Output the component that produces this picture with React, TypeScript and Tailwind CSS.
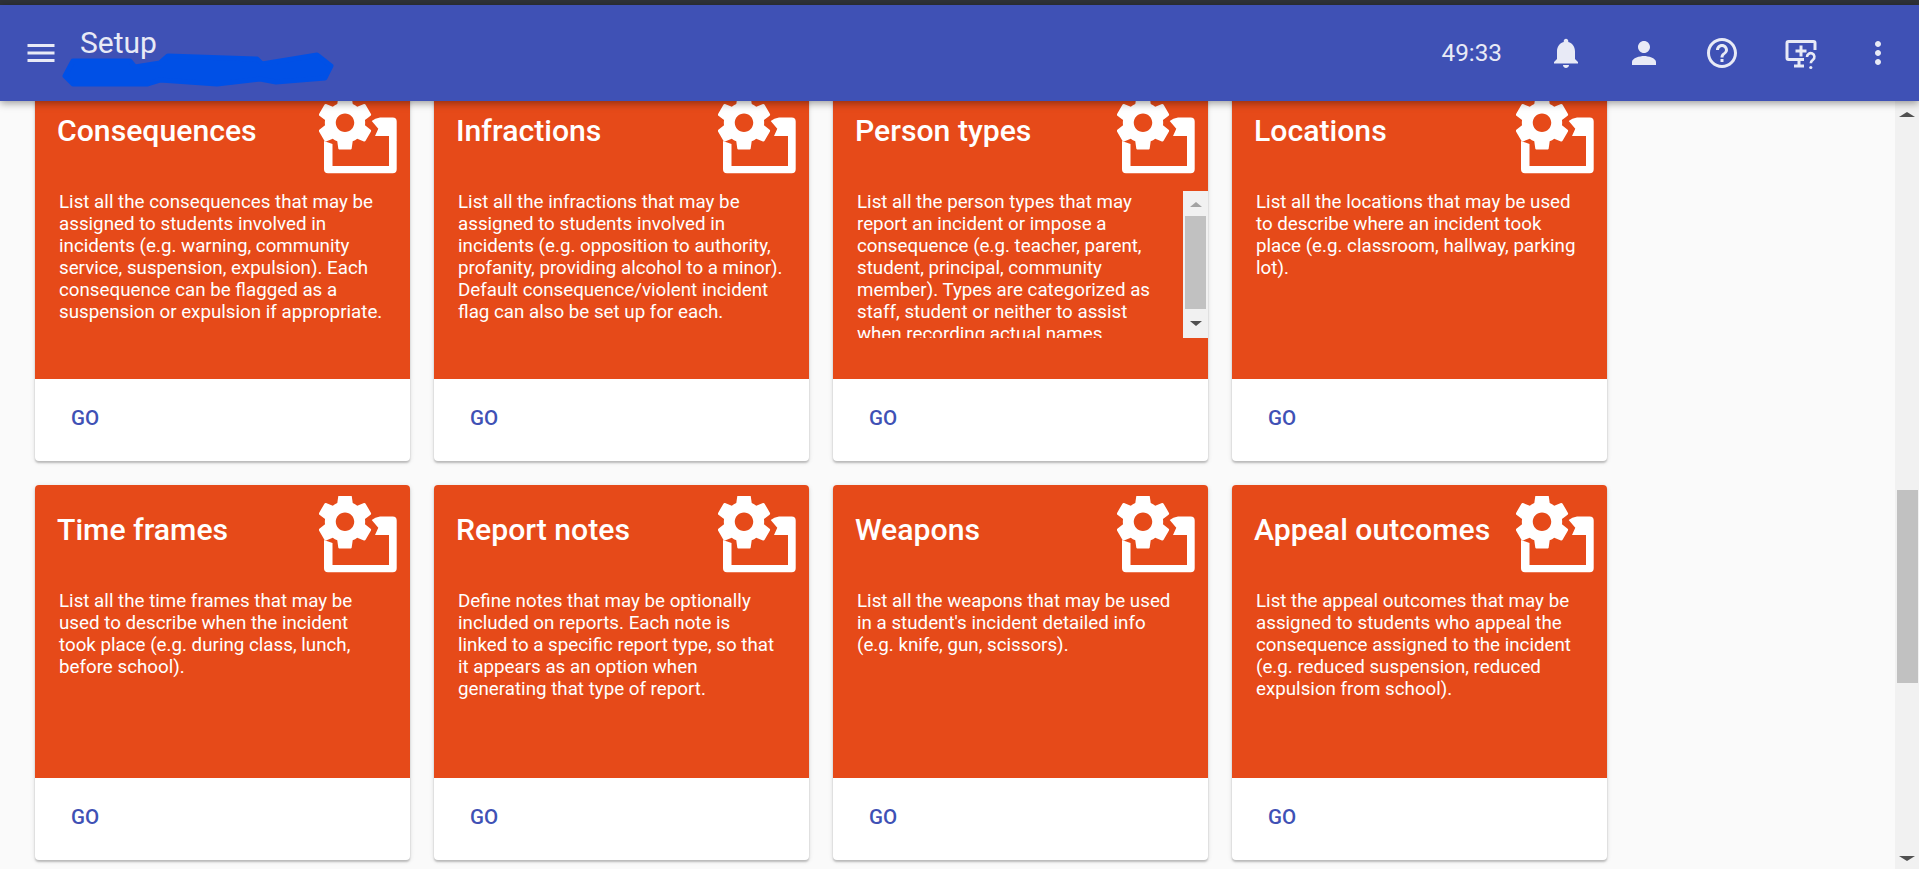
import type { ReactNode } from "react";

const cards = [
	{
		title: "Consequences",
		text: "List all the consequences that may be assigned to students involved in incidents (e.g. warning, community service, suspension, expulsion). Each consequence can be flagged as a suspension or expulsion if appropriate.",
	},
	{
		title: "Infractions",
		text: "List all the infractions that may be assigned to students involved in incidents (e.g. opposition to authority, profanity, providing alcohol to a minor). Default consequence/violent incident flag can also be set up for each.",
	},
	{
		title: "Person types",
		text: "List all the person types that may report an incident or impose a consequence (e.g. teacher, parent, student, principal, community member). Types are categorized as staff, student or neither to assist when recording actual names",
		scroll: true,
	},
	{
		title: "Locations",
		text: "List all the locations that may be used to describe where an incident took place (e.g. classroom, hallway, parking lot).",
	},
	{
		title: "Time frames",
		text: "List all the time frames that may be used to describe when the incident took place (e.g. during class, lunch, before school).",
	},
	{
		title: "Report notes",
		text: "Define notes that may be optionally included on reports. Each note is linked to a specific report type, so that it appears as an option when generating that type of report.",
	},
	{
		title: "Weapons",
		text: "List all the weapons that may be used in a student's incident detailed info (e.g. knife, gun, scissors).",
	},
	{
		title: "Appeal outcomes",
		text: "List the appeal outcomes that may be assigned to students who appeal the consequence assigned to the incident (e.g. reduced suspension, reduced expulsion from school).",
	},
];

const Icon = ({ d }: { d: string }) => (
	<svg viewBox="0 0 24 24" className="h-9 w-9 fill-[#e8eaf6]">
		<path d={d} />
	</svg>
);

const HeaderButton = ({ children }: { children: ReactNode }) => (
	<button type="button" className="flex h-9 w-[78px] items-center justify-center">
		{children}
	</button>
);

const MonitorHelpIcon = () => (
	<svg viewBox="0 0 36 36" className="h-9 w-9 fill-none stroke-[#e8eaf6]" strokeWidth="3">
		<path d="M33 15V8a1.5 1.5 0 0 0-1.5-1.5h-25A1.5 1.5 0 0 0 5 8v15a1.5 1.5 0 0 0 1.5 1.5H22" />
		<path d="M17 25v5M12 31h10" />
		<path d="M19 10.500v11M13.500 16h11" />
		<path d="M25 22a3.700 3.700 0 1 1 6 2.800c-1.300 1-2.200 1.700-2.200 3.400" strokeWidth="2.600" />
		<circle cx="28.800" cy="32.500" r="1.600" className="fill-[#e8eaf6] stroke-none" />
	</svg>
);

const SetupIcon = () => (
	<svg viewBox="0 0 78 77" className="h-[77px] w-[78px] shrink-0 fill-white">
		<path d="M5 44l8.500 3v22H70V39H56l3.300-7.300-6.600-7.700q3.300-3 8.300-3.500h12.700a4 4 0 0 1 4 4v47.800a4 4 0 0 1-4 4H9a4 4 0 0 1-4-4z" />
		<path
			transform="translate(-7.600 -7.900) scale(2.800)"
			d="M19.140 12.940c.04-.3.06-.61.06-.94 0-.32-.02-.64-.07-.94l2.030-1.580c.18-.14.23-.41.12-.61l-1.920-3.320c-.12-.22-.37-.29-.59-.22l-2.390.96c-.5-.38-1.030-.7-1.620-.94l-.36-2.540c-.04-.24-.24-.41-.48-.41h-3.840c-.24 0-.43.17-.47.41l-.36 2.540c-.59.24-1.130.57-1.620.94l-2.390-.96c-.22-.08-.47 0-.59.22L2.740 8.870c-.12.21-.08.47.12.61l2.030 1.580c-.05.3-.09.63-.09.94s.02.64.07.94l-2.030 1.580c-.18.14-.23.41-.12.61l1.920 3.320c.12.22.37.29.59.22l2.390-.96c.5.38 1.030.7 1.620.94l.36 2.540c.05.24.24.41.48.41h3.840c.24 0 .44-.17.47-.41l.36-2.540c.59-.24 1.130-.56 1.620-.94l2.390.96c.22.08.47 0 .59-.22l1.920-3.320c.12-.22.07-.47-.12-.61l-2.010-1.580zM12 15.300c-1.820 0-3.300-1.480-3.300-3.300s1.480-3.300 3.300-3.300 3.300 1.480 3.300 3.300-1.480 3.300-3.300 3.300z"
		/>
	</svg>
);

const Card = ({ title, text, scroll }: { title: string; text: string; scroll?: boolean }) => (
	<div className="flex h-[375px] flex-col overflow-hidden rounded-[4px] bg-white shadow-[0_2px_2px_rgba(0,0,0,0.2),0_1px_5px_rgba(0,0,0,0.12)]">
		<div className="h-[293px] bg-[#e64a19] text-white">
			<div className="flex h-[105px] items-start justify-between pl-[22px] pr-[13px] pt-[11px]">
				<h2 className="pt-[13px] text-[30.200px] font-medium leading-[42px]">{title}</h2>
				<SetupIcon />
			</div>
			<div className="flex h-[147px]">
				<p className="h-full flex-1 overflow-hidden pl-[24px] pr-[26px] text-[18.750px] leading-[22px]">
					{text}
				</p>
				{scroll && (
					<div className="flex w-[25px] flex-col items-center bg-[#f1f1f1] py-[11px]">
						<div className="h-0 w-0 border-x-[6px] border-b-[5px] border-x-transparent border-b-[#a3a3a3]" />
						<div className="mt-[9px] h-[93px] w-[21px] bg-[#c1c1c1]" />
						<div className="mt-[12px] h-0 w-0 border-x-[6px] border-t-[5px] border-x-transparent border-t-[#505050]" />
					</div>
				)}
			</div>
		</div>
		<div className="flex flex-1 items-center pb-[3px] pl-[36px] text-[20.500px] font-medium text-[#3f51b5]">GO</div>
	</div>
);

export default function App() {
	return (
		<div className="flex h-[869px] flex-col overflow-hidden bg-[#fafafa] font-['Roboto',sans-serif]">
			<div className="h-[5px] shrink-0 bg-[#2f3238]" />
			<header className="relative z-10 flex h-[96px] shrink-0 items-center bg-[#3f51b5] pl-[23px] pr-[2px] text-[#e8eaf6] shadow-[0_2px_8px_rgba(0,0,0,0.4)]">
				<Icon d="M3 18h18v-2H3v2zm0-5h18v-2H3v2zm0-7v2h18V6H3z" />
				<div className="relative ml-[21px] self-start pt-[18px] text-[30px] leading-[40px]">
					Setup
					<svg
						viewBox="0 0 272 35"
						className="absolute left-[-18px] top-[47px] h-[35px] w-[272px] fill-[#0050e6] stroke-[#0050e6]"
						strokeWidth="5"
						strokeLinejoin="round"
					>
						<path d="M3 24L11 9 68 9 73 15 98 11 106 4 195 7 200 12 255 3 269 14 263 26 214 30 198 27 155 32 98 28 85 32 11 32z" />
					</svg>
				</div>
				<div className="ml-auto flex items-center">
					<span className="mr-[25px] text-[24.300px]">49:33</span>
					<HeaderButton>
						<Icon d="M12 22c1.100 0 2-.9 2-2h-4c0 1.100.89 2 2 2zm6-6v-5c0-3.070-1.640-5.640-4.500-6.320V4c0-.83-.67-1.500-1.500-1.500s-1.500.67-1.500 1.500v.68C7.630 5.360 6 7.920 6 11v5l-2 2v1h16v-1l-2-2z" />
					</HeaderButton>
					<HeaderButton>
						<Icon d="M12 12c2.210 0 4-1.790 4-4s-1.790-4-4-4-4 1.790-4 4 1.790 4 4 4zm0 2c-2.670 0-8 1.340-8 4v2h16v-2c0-2.660-5.330-4-8-4z" />
					</HeaderButton>
					<HeaderButton>
						<Icon d="M11 18h2v-2h-2v2zm1-16C6.480 2 2 6.480 2 12s4.480 10 10 10 10-4.480 10-10S17.520 2 12 2zm0 18c-4.410 0-8-3.590-8-8s3.590-8 8-8 8 3.590 8 8-3.590 8-8 8zm0-14c-2.210 0-4 1.790-4 4h2c0-1.100.9-2 2-2s2 .9 2 2c0 2-3 1.750-3 5h2c0-2.250 3-2.500 3-5 0-2.210-1.790-4-4-4z" />
					</HeaderButton>
					<HeaderButton>
						<MonitorHelpIcon />
					</HeaderButton>
					<HeaderButton>
						<Icon d="M12 8c1.100 0 2-.9 2-2s-.9-2-2-2-2 .9-2 2 .9 2 2 2zm0 2c-1.100 0-2 .9-2 2s.9 2 2 2 2-.9 2-2-.9-2-2-2zm0 6c-1.100 0-2 .9-2 2s.9 2 2 2 2-.9 2-2-.9-2-2-2z" />
					</HeaderButton>
				</div>
			</header>
			<div className="flex min-h-0 flex-1">
				<main className="min-w-0 flex-1 overflow-hidden pl-[35px]">
					<div className="-mt-[15px] grid grid-cols-[repeat(4,375px)] gap-[24px]">
						{cards.map((card) => (
							<Card key={card.title} {...card} />
						))}
					</div>
				</main>
				<div className="flex w-[24px] shrink-0 flex-col items-center bg-[#f1f1f1] pt-[11px] pb-[8px]">
					<div className="h-0 w-0 border-x-[8px] border-b-[5px] border-x-transparent border-b-[#505050]" />
					<div className="mt-[373px] h-[193px] w-[21px] bg-[#c1c1c1]" />
					<div className="mt-auto h-0 w-0 border-x-[8px] border-t-[5px] border-x-transparent border-t-[#505050]" />
				</div>
			</div>
		</div>
	);
}
